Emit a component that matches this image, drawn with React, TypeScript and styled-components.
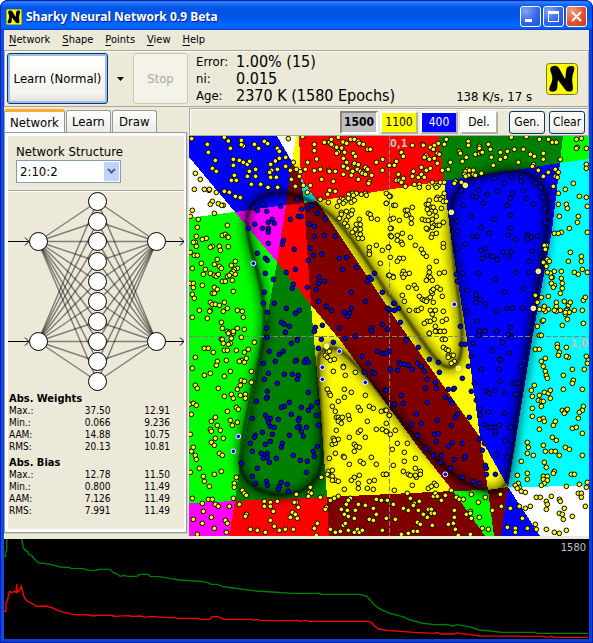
import React from "react";
import styled, { createGlobalStyle, css } from "styled-components";

const Global = createGlobalStyle`
  * { box-sizing: border-box; }
  body { margin: 0; background: #fff; }
  button, select { font: inherit; color: inherit; margin: 0; }
`;

const face = "#ece9d8";
const shade = "#aca899";

const Frame = styled.main`
  font-family: "DejaVu Sans Condensed", "DejaVu Sans", Tahoma, sans-serif;
  font-size: 12px;
  line-height: 16px;
  color: #000;
  background: ${face};
  border: 4px solid #0a3ee0;
  border-top: 0;
  border-left-color: #0f4be8;
  border-radius: 8px 8px 0 0;
  outline: 1px solid #0020a8;
  outline-offset: -1px;
`;

const TitleBar = styled.header`
  display: flex;
  align-items: center;
  gap: 2px;
  height: 30px;
  margin: 0 -4px;
  padding: 3px 6px 0 6px;
  border-radius: 8px 8px 0 0;
  background: linear-gradient(#0a3fc0 0, #2f86ff 2px, #1a6cf5 4px, #0054e3 8px, #0055e5 16px, #0066ff 25px, #0060f5 28px, #003dd0 30px);
`;

const Title = styled.h1`
  flex: 1;
  margin: 0 0 0 2px;
  font: bold 12px/18px "Noto Sans", "Open Sans", sans-serif;
  color: #fff;
  text-shadow: 1px 1px #0a1f86;
  white-space: nowrap;
`;

const CaptionButton = styled.button<{ $close?: boolean }>`
  width: 21px;
  height: 21px;
  padding: 0;
  border: 1px solid #fff;
  border-radius: 3px;
  background: ${(p) =>
    p.$close
      ? "radial-gradient(circle at 25% 20%, #f0a080, #e0532f 55%, #c8371a)"
      : "radial-gradient(circle at 25% 20%, #85a5f5, #3468e8 55%, #1c4fd8)"};
  svg { display: block; }
`;

const MenuBar = styled.nav`
  display: flex;
  align-items: center;
  gap: 12px;
  height: 20px;
  padding: 0 5px;
  font-size: 11px;
`;

const MenuItem = styled.button`
  padding: 0;
  border: 0;
  background: none;
  line-height: 16px;
  u { text-underline-offset: 2px; }
`;

const Toolbar = styled.section`
  display: flex;
  align-items: center;
  height: 57px;
  padding: 0 10px 0 2px;
  border: 1px solid ${shade};
  box-shadow: inset 1px 1px #fff;
`;

const xpButton = css`
  border: 1px solid #003c74;
  border-radius: 3px;
  background: linear-gradient(#fff, #f4f3ee 80%, #e2dfd2);
  padding: 0;
`;

const LearnButton = styled.button`
  ${xpButton}
  width: 101px;
  height: 51px;
  font-size: 13px;
  box-shadow: inset 0 0 0 2px #9dbcf0;
`;

const DropButton = styled.button`
  display: grid;
  place-items: center;
  width: 25px;
  height: 51px;
  padding: 0;
  border: 0;
  background: none;
`;

const StopButton = styled.button`
  ${xpButton}
  width: 55px;
  height: 51px;
  font-size: 13px;
  color: #aca899;
  background: #f4f3ea;
  border-color: #cbc8b9;
`;

const Readout = styled.dl`
  display: grid;
  grid-template-columns: 40px auto;
  align-items: center;
  margin: 0 0 0 8px;
  line-height: 17px;
  dt { font-size: 13px; }
  dd { margin: 0; font-size: 16px; white-space: nowrap; }
`;

const Speed = styled.span`
  flex: 1;
  align-self: flex-end;
  text-align: right;
  margin: 0 14px 1px 0;
  font-size: 13px;
  white-space: nowrap;
`;

const Body = styled.div`
  display: grid;
  grid-template-columns: 185px 1fr;
  padding-top: 1px;
`;

const Side = styled.aside`
  display: flex;
  flex-direction: column;
  padding: 0 2px 3px 0;
`;

const Tabs = styled.div`
  display: flex;
  align-items: flex-end;
  gap: 1px;
  height: 24px;
`;

const Tab = styled.button<{ $active?: boolean }>`
  height: ${(p) => (p.$active ? 24 : 22)}px;
  min-width: 45px;
  margin-bottom: ${(p) => (p.$active ? -1 : 0)}px;
  padding: 0 5px;
  border: 1px solid #919b9c;
  border-bottom: 0;
  border-top: ${(p) => (p.$active ? "3px solid #ffae2c" : "1px solid #919b9c")};
  border-radius: 3px 3px 0 0;
  background: ${(p) => (p.$active ? "#fcfcfe" : "linear-gradient(#fff, #ecebe6)")};
  font-size: 13px;
`;

const TabPage = styled.div`
  flex: 1;
  padding: 3px 2px 3px 3px;
  border: 1px solid #919b9c;
  background: #fcfcfe;
  box-shadow: 1px 1px #d0cec0;
`;

const PageFace = styled.div`
  height: 100%;
  background: ${face};
`;

const StructureField = styled.div`
  padding: 8px 8px 7px;
  border-bottom: 1px solid ${shade};
  box-shadow: 0 1px #fff;
  font-size: 13px;
  label { display: block; }
`;

const SelectBox = styled.div`
  position: relative;
  width: 105px;
  svg { position: absolute; right: 2px; top: 2px; pointer-events: none; }
`;

const Select = styled.select`
  display: block;
  width: 100%;
  height: 23px;
  padding: 0 3px;
  border: 1px solid #7f9db9;
  border-radius: 0;
  background: #fff;
  appearance: none;
`;

const Diagram = styled.svg`
  display: block;
  width: 100%;
`;

const Stats = styled.table`
  width: calc(100% - 15px);
  margin: 0 0 3px 1px;
  border-collapse: collapse;
  font-size: 10px;
  line-height: 12px;
  table-layout: fixed;
  caption { text-align: left; font-size: 11px; font-weight: bold; line-height: 13px; }
  th { width: 42px; text-align: left; font-weight: normal; padding: 0; }
  td { text-align: right; padding: 0; }
`;

const PointBar = styled.div`
  display: flex;
  align-items: center;
  justify-content: flex-end;
  gap: 2px;
  height: 28px;
  padding-right: 3px;
  border: 1px solid ${shade};
  box-shadow: inset 1px 1px #fff;
`;

const PointButton = styled.button<{ $bg: string; $ink?: string; $down?: boolean; $strong?: boolean }>`
  width: 38px;
  height: 23px;
  padding: 0;
  border: 2px solid;
  border-color: ${(p) => (p.$down ? "#8c897c #fff #fff #8c897c" : "#fff #b5b2a4 #b5b2a4 #fff")};
  background: ${(p) => p.$bg};
  color: ${(p) => p.$ink || "#000"};
  font-weight: ${(p) => (p.$strong ? "bold" : "normal")};
`;

const ActionButton = styled.button`
  ${xpButton}
  width: 36px;
  height: 23px;
`;

const ActionGroup = styled.div`
  display: flex;
  gap: 4px;
  margin-left: 9px;
`;

const Plot = styled.svg`
  display: block;
  width: 100%;
  aspect-ratio: 1;
`;

const Graph = styled.svg`
  display: block;
  width: 100%;
  height: 100px;
  background: #000;
`;

const GraphPane = styled.section`
  position: relative;
  margin-top: 3px;
  span { position: absolute; top: 1px; right: 3px; color: #c0c0c0; font-size: 11px; }
`;

const colours: Record<string, string> = {
  w: "#fff", b: "#0000ff", y: "#ffff00", r: "#ff0000", c: "#00ffff",
  d: "#800000", g: "#008000", l: "#00ff00", m: "#ff00ff",
};

const cells: [string, string][] = [
  ["w", "0,21 46,76 0,82"],
  ["b", "0,0 88,0 103,26 97,69 46,76 0,21"],
  ["w", "88,0 108,0 103,26"],
  ["y", "107,0 110,0 112,42 103,26"],
  ["r", "110,0 250,0 255,45 128,65 112,42"],
  ["c", "112,42 128,65 115,67"],
  ["d", "103,26 112,42 115,67 97,69"],
  ["g", "250,0 374,0 371,27 255,45"],
  ["l", "374,0 400,0 400,23 371,27"],
  ["c", "371,27 400,23 400,350 319,351 343,204 363,94"],
  ["m", "46,76 97,69 88,126"],
  ["l", "0,82 46,76 88,126 76,194 51,327 46,365 0,367"],
  ["r", "97,69 115,67 122,169 88,126"],
  ["g", "88,126 122,169 125,204 131,267 138,361 46,365 51,327 76,194"],
  ["y", "122,169 151,204 196,266 229,311 264,355 138,361 131,267 125,204"],
  ["d", "115,67 128,65 206,182 291,301 299,354 264,355 229,311 196,266 151,204 122,169"],
  ["y", "128,65 255,45 261,94 278,204 291,301 206,182"],
  ["y", "291,301 319,351 299,354"],
  ["b", "255,45 371,27 363,94 343,204 319,351 291,301 278,204 261,94"],
  ["m", "0,367 46,365 40,400 0,400"],
  ["r", "46,365 138,361 140,400 40,400"],
  ["d", "138,361 264,355 296,400 140,400"],
  ["l", "264,355 299,354 305,400 296,400"],
  ["d", "299,354 319,351 312,400 305,400"],
  ["b", "319,351 351,400 312,400"],
  ["w", "319,351 400,350 400,400 351,400"],
];

const boundary =
  "M88,57 C74,57 60,65 58,82 C57,100 64,118 68,135 C74,155 77,180 75,196 C70,230 54,285 51,325 C51,345 70,359 93,359 C118,358 133,342 133,321 C134,290 129,255 129,228 C129,213 138,208 150,214 C168,226 186,252 206,276 C222,297 242,320 262,336 C280,352 308,364 317,347 C323,330 325,300 328,280 C334,240 352,135 357,98 C361,67 360,48 340,38 C325,32 290,37 275,48 C261,60 261,75 263,100 C265,135 271,165 273,195 C274,225 267,238 252,228 C235,212 222,185 197,155 C180,128 160,96 143,80 C125,64 108,57 88,57 Z";

// Samples are stored per quadrant in a 1200-unit space; each quadrant has its own origin.
type Quad = { at: [number, number]; yellow: string; blue: string; edgeYellow: string; edgeBlue: string };

const quads: Quad[] = [
  {
    at: [-12, -18],
    yellow:
      "20,26 67,43 118,22 130,33 136,55 169,31 175,48 169,44 208,43 221,55 238,34 248,41 277,55 310,26 353,20 388,43 388,62 395,87 70,67 91,91 82,115 94,124 145,88 145,106 163,91 175,97 187,103 194,94 212,118 193,124 212,139 187,139 148,136 139,151 154,151 199,163 166,203 133,187 118,184 94,187 227,163 249,172 283,64 283,85 271,93 257,103 277,118 260,121 257,142 254,127 302,109 316,121 325,97 334,118 343,139 331,169 355,166 368,97 361,118 367,187 302,82 274,142 319,148 346,125 376,166 31,130 46,148 28,178 58,178 72,181 73,178 115,226 100,221 82,214 76,223 110,226 88,250 22,241 16,259 40,268 37,292 127,286 151,199 278,172 " +
      "418,37 433,37 439,28 443,46 439,43 460,22 474,36 470,54 455,52 460,66 455,70 479,67 485,40 497,28 508,28 520,34 523,40 535,43 548,58 556,58 505,70 511,79 506,104 475,85 475,109 485,97 475,133 488,115 503,124 508,100 520,104 517,118 526,124 535,127 541,112 548,118 532,130 541,133 560,136 553,154 551,160 520,148 499,136 593,88 574,97 592,121 613,106 406,118 388,122 431,121 433,124 451,124 445,154 410,148 451,184 434,181 428,193 406,208 430,217 628,106 " +
      "491,193 503,190 514,190 505,196 529,193 541,190 544,196 470,205 463,214 457,229 475,208 481,214 490,205 499,217 508,211 475,220 604,190 604,220 616,199 626,226 550,250 556,254 559,265 577,268 469,247 469,253 484,244 502,241 491,259 484,271 499,253 523,268 479,280 487,289 463,265 514,283 526,284 511,298 526,298 502,307 517,313 526,313 520,325 532,325 616,268 619,295 619,320 611,352 592,361 574,346 553,352 553,366 553,373 586,400 611,436 624,439 " +
      "34,319 64,325 52,328 31,337 25,337 34,349 112,316 121,313 127,319 130,322 130,350 82,349 76,352 103,349 106,361 16,367 28,376 37,376 97,388 49,400 22,415 88,403 103,409 109,415 61,418 76,430 55,433 88,436 94,439 127,439 100,433 151,394 139,406 157,415 148,418 145,424 139,430 151,433 133,436 112,454 121,454 142,451 16,460 25,460 52,466 25,473 88,472 97,478 82,490 88,490 22,493 28,505 118,517 76,517 82,523 91,523 103,526 76,541 74,544 127,535 115,544 43,541 157,541 172,544 175,562 22,562 67,565 109,577 112,595 127,604 133,607 145,610 157,595 178,598 109,628 139,625 145,484",
    blue:
      "236,223 206,233 217,241 245,244 287,229 337,208 380,227 368,235 349,238 340,259 349,259 316,268 262,268 268,280 250,277 232,295 209,283 190,295 250,295 250,301 250,307 250,340 295,331 292,343 217,370 241,385 247,391 328,358 331,418 304,427 241,430 265,448 325,463 322,475 367,472 238,487 235,520 268,520 247,547 304,535 343,541 331,550 289,577 298,583 313,589 301,607 244,595 247,622 337,628 397,250 421,265 373,283 388,289 388,319 418,316 451,319 376,355 385,376 370,391 410,373 463,385 484,382 472,418 514,412 403,442 418,454 400,460 394,478 499,487 568,430 553,442 547,454 559,448 592,487 541,514 400,514 424,529 439,541 499,535 478,547 493,550 487,559 463,595 391,592 412,586 388,604 559,595 559,604 592,583 607,598 511,619 607,535 613,541 628,541 626,520",
    edgeYellow: "",
    edgeBlue: "205,400",
  },
  {
    at: [588, -18],
    yellow:
      "82,46 112,43 115,46 148,46 136,52 145,58 160,40 157,70 49,67 55,79 34,94 13,106 124,76 127,82 118,82 133,88 148,85 109,112 85,124 124,121 136,115 157,100 163,73 178,43 184,28 196,97 190,118 172,121 40,133 34,151 43,151 52,148 49,157 61,169 55,145 82,139 100,142 109,133 118,142 103,163 88,163 103,172 130,172 142,157 151,166 160,166 154,172 166,157 178,157 211,154 208,160 229,157 " +
      "250,34 250,46 283,49 283,55 310,43 316,58 223,64 226,70 244,82 271,73 283,70 289,67 292,67 319,82 346,88 325,106 232,94 247,118 241,124 238,133 250,136 253,121 265,121 265,133 271,136 289,130 242,139 346,67 367,64 361,82 388,58 400,97 379,22 424,20 415,58 436,73 448,79 463,28 475,70 475,88 490,28 502,37 514,37 445,103 442,109 460,121 490,127 511,118 520,127 475,139 511,139 526,88 517,142 505,169 574,28 589,25 577,52 574,55 604,55 " +
      "565,160 604,103 604,115 583,199 541,178 520,190 604,202 607,229 544,223 547,235 520,223 523,259 580,259 577,277 553,295 529,307 508,310 520,310 607,307 556,367 589,379 589,394 550,394 484,346 478,346 481,358 487,388 478,400 475,397 484,409 493,394 508,424 496,430 502,442 499,442 529,445 532,460 532,475 508,466 505,472 499,460 487,427 568,427 580,433 592,418 607,427 529,424 526,490 469,502 490,499 550,526 556,517 514,529 514,517 538,514 547,538 544,541 526,541 514,544 553,547 541,553 547,568 532,586 508,541 490,538 481,544 475,538 463,538 478,529 451,496 457,517 472,574 457,589 595,511 601,502 568,541 592,541 595,580 466,616 475,571 541,547 " +
      "13,199 4,220 31,226 82,232 61,241 67,241 70,253 64,256 79,265 25,265 43,271 79,280 16,295 16,316 19,319 37,316 52,310 37,331 49,337 52,343 76,322 10,352 91,346 109,358 115,370 124,379 16,382 55,385 43,385 37,394 13,436 25,442 55,424 52,433 61,433 73,430 55,442 70,472 88,466 94,475 52,496 58,514 103,499 112,508 118,511 127,508 124,514 73,541 94,541 100,541 109,535 136,502 145,517 142,490 139,484 145,478 157,472 166,478 172,499 154,394 133,412 133,427 163,430 178,427 130,439 136,442 124,451 142,451 175,341 175,352 136,541 151,541 142,553 175,544 127,574 118,580 136,574 148,568 172,574 184,568 151,589 133,610 163,604 154,604 178,604 157,202 172,202 166,208 175,214 184,214 178,190 133,211 154,208 124,223 130,223 139,232 145,232 127,238 139,244 151,244 133,250 169,235 112,268 121,271 130,271 142,268 142,280 148,286 157,286 127,298 124,295 142,292 163,286 175,277 142,313 139,322 154,310 154,259",
    blue:
      "229,181 280,181 307,193 337,184 328,145 358,160 379,142 409,142 409,154 451,160 466,172 382,190 376,205 415,181 424,205 472,202 262,199 275,202 295,220 235,226 367,226 445,223 478,238 259,259 217,274 217,304 328,268 376,256 376,295 289,292 313,310 262,319 277,319 370,316 391,328 427,313 427,319 439,322 457,319 427,328 481,277 217,355 241,343 289,361 301,355 292,385 307,376 322,379 337,388 355,367 379,364 373,379 442,364 433,394 220,403 214,433 232,430 280,430 331,448 217,454 247,481 391,427 433,427 358,487 415,475 274,493 274,508 286,508 274,517 301,523 244,544 334,544 364,535 382,535 415,535 277,574 226,589 283,604 301,601 283,616 334,604 376,592 370,613 379,619 28,520 40,535 13,538 28,541 46,577 7,598 64,628",
    edgeYellow: "241,166 199,247 460,424 445,535",
    edgeBlue: "208,523",
  },
  {
    at: [-12, 582],
    yellow:
      "130,10 145,4 112,28 169,22 115,40 136,40 130,43 208,37 58,55 70,55 85,67 118,61 127,61 154,61 190,58 178,67 31,82 97,94 94,106 124,91 169,91 163,94 178,97 184,85 199,124 22,115 76,130 58,136 136,124 118,139 169,151 178,154 199,157 31,166 37,175 100,175 157,178 166,166 118,199 139,193 145,205 166,196 181,193 181,205 13,223 25,220 34,226 154,232 160,238 127,244 19,253 91,262 79,274 97,286 136,271 157,277 142,286 76,298 79,304 106,301 16,313 91,325 115,325 79,337 88,346 25,352 19,364 31,376 34,388 103,370 112,376 43,415 16,427 88,433 109,424 55,439 58,454 73,469 154,442 148,460 148,472 172,481 178,490 184,496 145,505 22,505 70,508 82,508 91,523 52,520 100,529 133,529 163,523 55,544 25,568 88,595 79,562 121,571 127,580 124,607 52,580 37,613 184,553 181,559 196,598 217,601 241,607 256,571 268,589 283,601 301,598 325,598 256,517 238,514 277,514 256,529 238,529 265,544 340,532 334,517 328,517 322,547 316,562 337,565 331,553 397,580 388,595 394,616 334,493 376,472 373,487 379,490 370,499 406,502 409,442 424,532 421,538 " +
      "427,61 427,67 421,76 427,82 436,91 448,88 433,64 445,124 475,109 475,112 511,127 481,136 427,178 433,190 436,196 478,178 499,187 460,214 442,229 478,202 520,232 541,196 553,229 565,235 526,241 451,244 454,262 460,262 466,268 472,262 460,274 469,280 493,268 490,256 547,274 454,301 520,307 526,301 574,298 592,298 604,304 541,322 589,244 601,241 613,256 445,325 460,328 442,343 451,340 448,331 493,322 508,343 514,349 523,352 508,364 616,313 451,370 475,379 478,382 433,385 526,394 535,400 559,382 574,403 604,433 493,403 430,424 442,421 433,436 442,439 451,451 460,454 427,433 508,442 523,436 520,460 520,475 478,478 460,499 442,451 499,451 547,475 565,478 568,451 553,454 595,433 " +
      "436,511 448,505 496,505 490,511 469,538 484,523 541,526 520,523 511,541 487,541 478,553 490,559 508,565 475,586 481,580 436,598 451,607 466,604 490,601 508,607 517,598 523,607 532,601 553,568 565,571 574,553 565,535 592,601 574,508 604,511 589,511",
    blue:
      "301,7 337,31 319,40 253,64 295,64 283,73 271,94 235,100 334,91 331,94 361,91 364,88 358,97 370,97 250,130 238,148 298,133 322,133 340,136 337,148 277,160 247,184 247,202 244,205 214,214 370,187 397,217 313,217 298,229 289,232 349,232 379,229 370,241 319,253 241,256 256,265 247,265 250,277 280,268 202,265 343,265 340,271 400,286 394,256 256,289 268,292 343,289 337,292 364,292 349,304 355,319 232,307 262,313 211,316 208,322 313,316 256,334 241,343 196,340 292,340 289,352 202,364 229,370 247,370 241,376 247,382 235,385 253,397 274,385 325,376 346,391 367,394 385,364 397,349 388,379 169,400 217,415 202,439 211,460 244,454 247,466 289,457 283,469 307,463 280,478 310,484 364,427 388,4 400,55 409,28 445,37 481,25 511,19 532,79 550,100 538,127 562,127 568,130 577,64 592,70 598,70 613,64 616,118 601,181 628,223 559,4",
    edgeYellow: "425,49",
    edgeBlue: "463,64 412,112 412,148 541,157 160,319 145,364",
  },
  {
    at: [588, 582],
    yellow:
      "133,10 151,4 166,4 178,4 172,28 181,28 175,52 184,58 190,61 190,76 199,76 205,76 190,82 208,94 199,100 4,241 13,256 4,280 4,304 31,301 37,340 67,340 22,358 58,367 91,385 25,406 58,394 4,433 55,424 70,433 76,436 91,415 106,424 106,433 94,442 91,436 82,466 130,475 148,460 154,466 139,469 28,481 199,481 " +
      "463,16 469,16 451,58 463,58 517,43 517,52 544,52 523,67 520,76 550,82 544,79 469,94 481,85 604,79 610,91 607,100 475,109 481,124 484,136 487,145 535,136 562,118 598,118 565,151 562,160 448,166 439,181 442,199 463,196 478,187 490,190 496,181 496,205 460,211 469,214 475,214 469,229 442,235 442,259 535,178 592,178 532,241 541,244 547,238 538,250 595,229 592,241 583,247 580,265 463,268 475,265 478,274 505,286 511,274 463,298 562,295 574,292 592,310 502,322 514,331 427,337 430,352 427,370 445,376 475,346 481,364 499,364 511,364 523,376 541,352 553,358 592,376 478,397 484,412 508,424 505,430 409,394 397,436 427,430 427,448 475,439 487,439 475,448 487,451 478,460 469,466 559,433 568,433 544,469 583,463 607,457 604,472 580,490 589,490 400,460 391,466 403,472 397,475 409,484 421,487 " +
      "454,502 466,502 499,499 484,514 487,523 484,538 523,508 526,514 538,535 523,550 532,553 535,568 562,559 484,598 508,607 523,610 544,601 601,529 589,502 " +
      "7,511 25,523 67,490 76,505 88,520 103,514 55,535 70,541 85,526 100,541 115,553 130,538 139,538 127,562 139,550 148,550 4,565 31,568 97,577 106,583 142,586 49,613 70,610 85,604 97,604 145,499 151,490 157,499 181,496 169,511 208,541 208,562 190,583 205,580 211,598 220,616 214,502 223,508 235,508 259,493 301,502 280,517 244,553 256,544 256,550 259,565 283,562 292,595 310,598 256,613 322,541 346,493 349,529 376,535 403,529 421,535 436,529 412,565 367,592 391,595 391,607 427,595 451,583 454,598",
    blue:
      "64,31 100,52 13,64 4,70 133,88 16,118 43,97 46,103 58,103 70,106 37,121 82,118 97,100 109,109 118,124 160,97 163,127 127,148 151,157 121,175 154,175 4,181 49,196 55,220 28,223 127,217 181,202 196,211 202,220 190,178 205,178 208,175 232,145 250,109 229,43 241,43 283,4 280,16 265,40 259,79 268,160 259,184 274,211 286,238 286,256 217,253 211,262 253,262 94,253 157,271 109,280 79,283 199,286 97,316 148,313 160,310 154,334 202,337 190,349 232,340 124,355 145,376 169,376 166,397 208,388 238,385 241,379 196,415 232,442 265,454 283,460 301,406 304,415 304,433 331,433 283,328 298,340 292,361 298,4 334,4 352,37 370,13 379,22 322,61 373,70 343,88 349,91 289,118 346,154 343,118 382,160 391,160 400,160 409,109 418,91 391,193 358,187 304,184 313,190 331,181 310,247 358,250 298,283 310,292 319,292 331,292 343,286 331,310 331,304 376,292 361,331 334,373 367,382",
    edgeYellow: "220,115",
    edgeBlue: "181,433",
  },
];

const Dots = ({ list, fill, edge }: { list: string; fill: string; edge?: boolean }) => (
  <g fill={fill} stroke={edge ? "#fff" : "#000"} strokeWidth={3}>
    {list.split(" ").filter(Boolean).map((p, i) => {
      const [x, y] = p.split(",").map(Number);
      return <circle key={i} cx={x} cy={y} r={7} />;
    })}
  </g>
);

const PlotView = () => (
  <Plot viewBox="0 0 1200 1200" role="img" aria-label="Classification map">
    <defs>
      <filter id="wide" x="-10%" y="-10%" width="120%" height="120%"><feGaussianBlur stdDeviation="5" /></filter>
      <filter id="tight" x="-10%" y="-10%" width="120%" height="120%"><feGaussianBlur stdDeviation="1" /></filter>
    </defs>
    <g transform="scale(3)">
      <g shapeRendering="crispEdges">
        {cells.map(([c, pts], i) => <polygon key={i} points={pts} fill={colours[c]} />)}
      </g>
      <path d={boundary} fill="none" stroke="#000" strokeWidth={10} opacity={0.5} filter="url(#wide)" />
      <path d={boundary} fill="none" stroke="#000" strokeWidth={3} opacity={0.6} filter="url(#tight)" />
      <path d="M200.500,0V400M0,200.500H400" stroke="#808080" strokeDasharray="5 2" shapeRendering="crispEdges" />
    </g>
    {quads.map((q, i) => (
      <g key={i} transform={`translate(${q.at[0]} ${q.at[1]})`}>
        <Dots list={q.yellow} fill="#ffff00" />
        <Dots list={q.blue} fill="#0000ff" />
        <Dots list={q.edgeYellow} fill="#ffff00" edge />
        <Dots list={q.edgeBlue} fill="#0000ff" edge />
      </g>
    ))}
    <g fill="#c0c0c0" fontSize={33} fontWeight="bold">
      <text x={603} y={34}>0,1</text>
      <text x={1144} y={634}>1,0</text>
    </g>
  </Plot>
);

const hidden = Array.from({ length: 10 }, (_, i) => 10.5 + i * 20);
const outer = [50.5, 150.5];

const NetworkDiagram = () => (
  <Diagram viewBox="0 0 176 201" role="img" aria-label="2:10:2 network">
    <g stroke="#000" strokeOpacity={0.45} strokeWidth={1.5}>
      {outer.map((o) =>
        hidden.map((h) => (
          <React.Fragment key={`${o}-${h}`}>
            <path d={`M30,${o}L89.500,${h}`} />
            <path d={`M148.500,${o}L89.500,${h}`} />
          </React.Fragment>
        ))
      )}
    </g>
    {outer.map((o) => (
      <g key={o} stroke="#000" fill="none" transform={`translate(0 ${o})`}>
        <path d="M0,0H21M17,-4L21,0L17,4M157,0H176M172,-4L176,0L172,4" />
      </g>
    ))}
    <g fill="#fff" stroke="#000">
      {hidden.map((h) => <circle key={h} cx={89.5} cy={h} r={9} />)}
      {outer.map((o) => (
        <React.Fragment key={o}>
          <circle cx={30.5} cy={o} r={9} />
          <circle cx={148.5} cy={o} r={9} />
        </React.Fragment>
      ))}
    </g>
  </Diagram>
);

const Logo = ({ size }: { size: number }) => (
  <svg width={size} height={size} viewBox="0 0 32 32" aria-hidden="true">
    <rect x="0.500" y="0.500" width="31" height="31" rx="3" fill="#ffff00" stroke="#77772a" />
    <path
      d="M6 3.500C9 2 12 3 13.500 6L19 16C20 13 19.500 10 20.500 6C21 3 25 2.500 27.500 3.500C29.500 5 27.500 9 26.500 13C25.500 18 27 22 27 26C26.500 29 22 29.500 19.500 27L12 17C11 20 12 23 11 26C10 29 5 29.500 3.500 27.500C2.500 25 5 22 6 18C7 14 5.500 11 4.500 8C4 6 4 4.500 6 3.500Z"
      fill="#000"
    />
  </svg>
);

const stats = [
  { title: "Abs. Weights", rows: [["Max.:", "37.50", "12.91"], ["Min.:", "0.066", "9.236"], ["AAM:", "14.88", "10.75"], ["RMS:", "20.13", "10.81"]] },
  { title: "Abs. Bias", rows: [["Max.:", "12.78", "11.50"], ["Min.:", "0.800", "11.49"], ["AAM:", "7.126", "11.49"], ["RMS:", "7.991", "11.49"]] },
];

const greenLine =
  "0,52 5,52 5,38 8,36 8,0 M53,0 56,12 57,24 62,32 72,39 74,45 85,51 88,56 98,67 104,72 120,73 138,76 152,79 168,84 196,85 200,88 236,89 258,94 270,95 285,91 318,91 328,101 342,106 348,112 360,109 370,112 398,112 408,106 432,106 438,112 466,113 500,119 528,123 592,127 612,131 622,136 640,136 655,142 688,147 722,152 758,156 804,159 866,163 948,163 948,166 1068,166 1088,172 1098,182 1112,199 1130,211 1158,223 1196,233 1216,242 1252,252 1290,257 1300,257 1326,256 1348,261 1358,257 1394,263 1408,267 1426,273 1460,276 1492,280 1594,280 1598,283 1752,283";
const redLine =
  "0,217 6,217 6,192 10,188 14,165 18,157 24,162 30,157 36,160 38,136 40,160 46,154 52,142 56,160 62,178 72,188 84,193 98,202 126,201 144,206 162,215 180,220 196,223 206,226 256,228 268,231 278,229 328,229 328,232 378,230 380,232 410,231 424,235 436,232 494,236 514,236 520,238 584,238 588,241 618,241 624,233 642,232 650,237 662,241 742,241 748,244 760,241 768,244 868,245 884,244 886,247 910,244 916,247 1096,247 1104,252 1112,262 1124,270 1150,274 1190,277 1230,280 1290,283 1300,280 1310,285 1350,285 1360,281 1370,284 1402,287 1426,291 1620,292 1626,295 1644,292 1648,295 1752,295";

const Menu = ({ text }: { text: string }) => (
  <MenuItem type="button"><u>{text[0]}</u>{text.slice(1)}</MenuItem>
);

export default function App() {
  return (
    <>
      <Global />
      <Frame>
        <TitleBar>
          <Logo size={16} />
          <Title>Sharky Neural Network 0.9 Beta</Title>
          <CaptionButton type="button" aria-label="Minimize">
            <svg width="19" height="19"><path d="M4 13.500H11" stroke="#fff" strokeWidth="3" /></svg>
          </CaptionButton>
          <CaptionButton type="button" aria-label="Maximize">
            <svg width="19" height="19" fill="none" stroke="#fff"><rect x="4.500" y="4.500" width="10" height="10" /><path d="M4 5.500H15" strokeWidth="3" /></svg>
          </CaptionButton>
          <CaptionButton type="button" aria-label="Close" $close>
            <svg width="19" height="19"><path d="M5 5L14 14M14 5L5 14" stroke="#fff" strokeWidth="2" /></svg>
          </CaptionButton>
        </TitleBar>
        <MenuBar>
          {["Network", "Shape", "Points", "View", "Help"].map((m) => <Menu key={m} text={m} />)}
        </MenuBar>
        <Toolbar>
          <LearnButton type="button">Learn (Normal)</LearnButton>
          <DropButton type="button" aria-label="Learn options">
            <svg width="7" height="4"><path d="M0 0H7L3.500 4Z" /></svg>
          </DropButton>
          <StopButton type="button" disabled>Stop</StopButton>
          <Readout>
            <dt>Error:</dt><dd>1.00% (15)</dd>
            <dt>ni:</dt><dd>0.015</dd>
            <dt>Age:</dt><dd>2370 K (1580 Epochs)</dd>
          </Readout>
          <Speed>138 K/s, 17 s</Speed>
          <Logo size={32} />
        </Toolbar>
        <Body>
          <Side>
            <Tabs role="tablist">
              <Tab type="button" role="tab" aria-selected="true" $active>Network</Tab>
              <Tab type="button" role="tab" aria-selected="false">Learn</Tab>
              <Tab type="button" role="tab" aria-selected="false">Draw</Tab>
            </Tabs>
            <TabPage role="tabpanel">
              <PageFace>
                <StructureField>
                  <label htmlFor="structure">Network Structure</label>
                  <SelectBox>
                    <Select id="structure" defaultValue="2:10:2"><option>2:10:2</option></Select>
                    <svg width="15" height="19" viewBox="0 0 15 19">
                      <rect width="15" height="19" rx="1" fill="#c1d3fb" />
                      <path d="M4 7L7.500 10.500L11 7" fill="none" stroke="#4d6185" strokeWidth="2" />
                    </svg>
                  </SelectBox>
                </StructureField>
                <NetworkDiagram />
                {stats.map((s) => (
                  <Stats key={s.title}>
                    <caption>{s.title}</caption>
                    <tbody>
                      {s.rows.map(([n, a, b]) => (
                        <tr key={n}><th scope="row">{n}</th><td>{a}</td><td>{b}</td></tr>
                      ))}
                    </tbody>
                  </Stats>
                ))}
              </PageFace>
            </TabPage>
          </Side>
          <section>
            <PointBar>
              <PointButton type="button" $bg="#c0c0c0" $down $strong>1500</PointButton>
              <PointButton type="button" $bg="#ffff00">1100</PointButton>
              <PointButton type="button" $bg="#0000ff" $ink="#fff">400</PointButton>
              <PointButton type="button" $bg="#fff">Del.</PointButton>
              <ActionGroup>
                <ActionButton type="button">Gen.</ActionButton>
                <ActionButton type="button">Clear</ActionButton>
              </ActionGroup>
            </PointBar>
            <PlotView />
          </section>
        </Body>
        <GraphPane>
          <Graph viewBox="0 0 1755 300" preserveAspectRatio="none" role="img" aria-label="Error history">
            <g fill="none" strokeWidth={4}>
              <path d={`M${greenLine}`} stroke="#008000" />
              <path d={`M${redLine}`} stroke="#ff0000" />
            </g>
          </Graph>
          <span>1580</span>
        </GraphPane>
      </Frame>
    </>
  );
}
